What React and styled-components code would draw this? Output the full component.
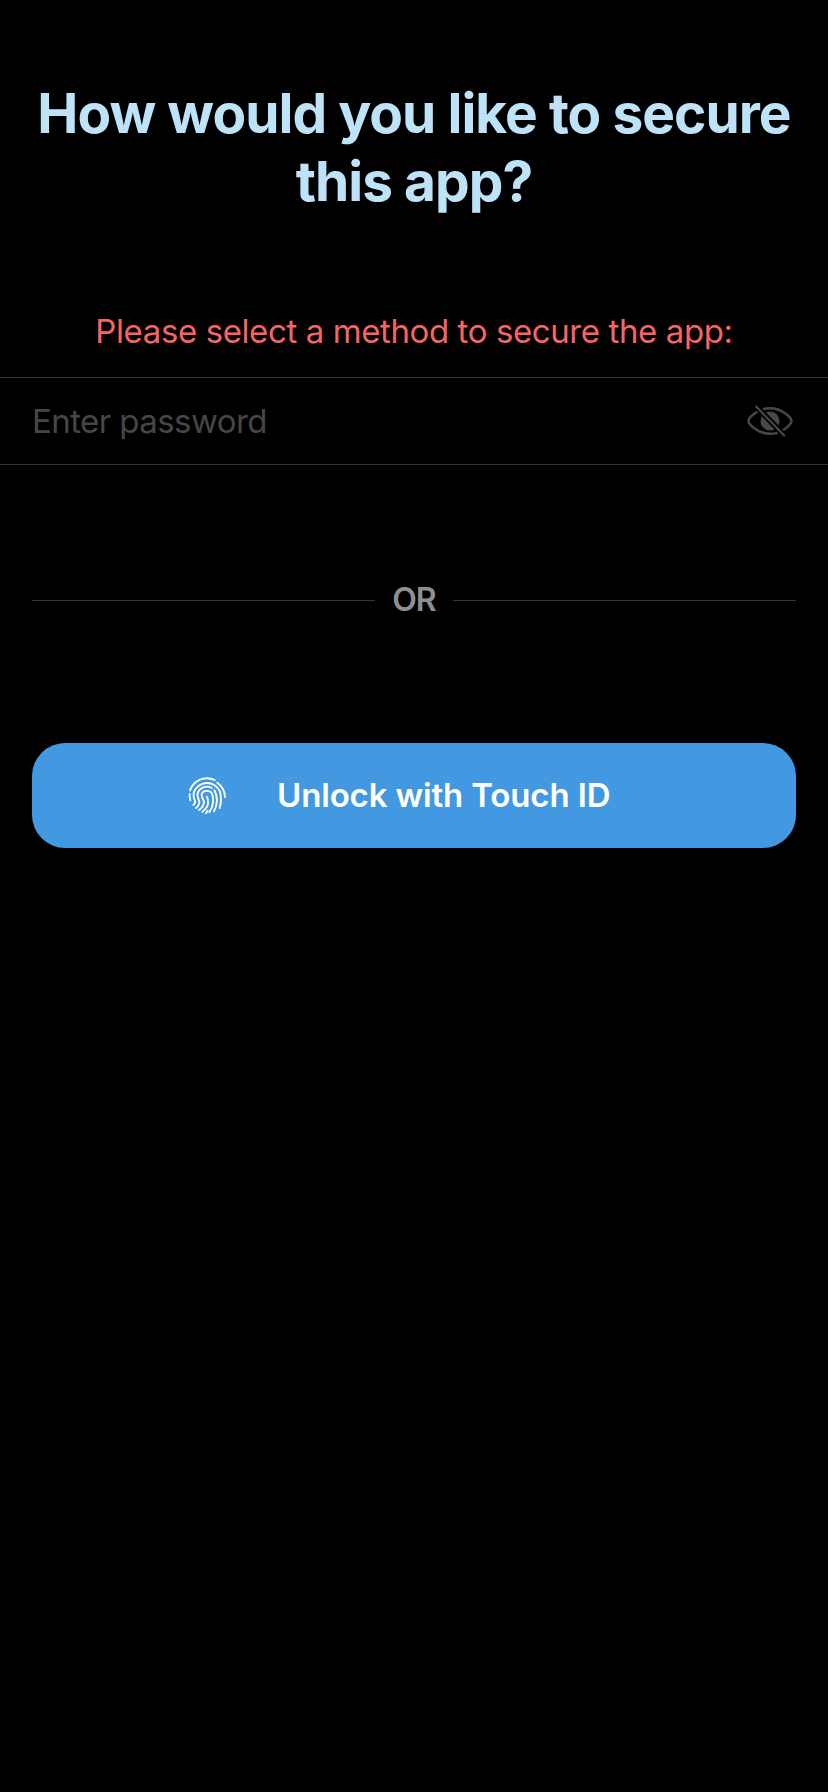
import React from "react";
import styled, { createGlobalStyle } from "styled-components";

const GlobalStyle = createGlobalStyle`
  *, *::before, *::after { box-sizing: border-box; }
  body {
    margin: 0;
    background: #000;
    font-family: Inter, "Liberation Sans", sans-serif;
  }
`;

const Screen = styled.main`
  display: flex;
  flex-direction: column;
  min-height: 1792px;
  padding-top: 79px;
  background: #000;
`;

const Title = styled.h1`
  margin: 0;
  color: #bee3f8;
  font-size: 55px;
  font-weight: 700;
  line-height: 68px;
  letter-spacing: -0.96px;
  text-align: center;
`;

const Hint = styled.p`
  margin: 96px 0 26px;
  color: #f56565;
  font-size: 33px;
  line-height: 40px;
  letter-spacing: -0.4px;
  text-align: center;
`;

const Field = styled.label`
  display: flex;
  align-items: center;
  height: 88px;
  padding: 0 35px 0 32px;
  border: solid #333336;
  border-width: 1px 0;
`;

const PasswordInput = styled.input`
  flex: 1;
  min-width: 0;
  height: 44px;
  padding: 0;
  border: 0;
  outline: 0;
  background: transparent;
  color: #fff;
  font: 400 33px/44px Inter, "Liberation Sans", sans-serif;
  letter-spacing: -0.57px;

  &::placeholder {
    color: #464648;
    opacity: 1;
  }
`;

const IconButton = styled.button`
  display: flex;
  padding: 0;
  border: 0;
  background: none;
  color: #48484a;
`;

const Divider = styled.div`
  display: flex;
  align-items: center;
  height: 40px;
  margin: 115px 32px 0;
  color: #8e8e93;
  font-size: 32px;
  font-weight: 600;
  letter-spacing: -1px;

  &::before,
  &::after {
    content: "";
    flex: 1;
    height: 1px;
    background: #363638;
  }
`;

const DividerLabel = styled.span`
  width: 78px;
  line-height: 40px;
  text-align: center;
`;

const UnlockButton = styled.button`
  display: flex;
  align-items: center;
  height: 105px;
  margin: 123px 32px 0;
  padding: 0 0 0 156px;
  border: 0;
  border-radius: 33px;
  background: #4299e1;
  color: #fff;
  font: 600 33px/40px Inter, "Liberation Sans", sans-serif;
  letter-spacing: -0.15px;
`;

const ButtonLabel = styled.span`
  margin-left: 51px;
  padding-bottom: 1px;
  white-space: nowrap;
`;

function EyeOffIcon() {
  return (
    <svg width="46" height="32" viewBox="0 0 138 96" fill="none" aria-hidden="true">
      <mask id="slashGap" maskUnits="userSpaceOnUse" x="0" y="0" width="138" height="96">
        <rect width="138" height="96" fill="#fff" />
        <path d="M20 -4L120 100" stroke="#000" strokeWidth="17" />
      </mask>
      <g mask="url(#slashGap)">
        <path
          d="M4.500 48C4.500 38 34 9.500 69 9.500S133.500 38 133.500 48S104 86.500 69 86.500S4.500 58 4.500 48Z"
          stroke="currentColor"
          strokeWidth="7.500"
        />
        <circle cx="69" cy="48" r="28.500" fill="currentColor" />
      </g>
      <path d="M27.500 4.500L111.500 91.500" stroke="currentColor" strokeWidth="6.500" strokeLinecap="round" />
    </svg>
  );
}

function FingerprintIcon() {
  return (
    <svg width="38" height="38" viewBox="25 37 114 114" fill="none" aria-hidden="true">
      <g stroke="currentColor" strokeWidth="5.600" strokeLinecap="round" strokeLinejoin="round">
        <path d="M31 77A54 54 0 0 1 105 46" />
        <path d="M30 88Q29 97 32 107" />
        <path d="M113 54A56 56 0 0 1 136 97" />
        <path d="M41 121Q48 116 46 109C43 102 40 95 42 85A42 42 0 0 1 121 81Q127 104 120 130" />
        <path d="M49 130Q60 121 59 110C55 101 52 94 54 86A29 29 0 0 1 96 70" />
        <path d="M104 77C115 95 114 120 103 140" />
        <path d="M58 136Q72 126 73 112C71 103 64 96 66 89C69 75 93 75 98 89C103 108 99 128 89 143" />
        <path d="M68 141C80 132 87 120 85 109Q84 102 82 96" />
        <path d="M79 146L84 138" />
      </g>
    </svg>
  );
}

export default function App() {
  return (
    <>
      <GlobalStyle />
      <Screen>
        <Title>How would you like to secure this app?</Title>
        <Hint>Please select a method to secure the app:</Hint>
        <Field>
          <PasswordInput type="password" placeholder="Enter password" />
          <IconButton type="button" aria-label="Show password">
            <EyeOffIcon />
          </IconButton>
        </Field>
        <Divider>
          <DividerLabel>OR</DividerLabel>
        </Divider>
        <UnlockButton type="button">
          <FingerprintIcon />
          <ButtonLabel>Unlock with Touch ID</ButtonLabel>
        </UnlockButton>
      </Screen>
    </>
  );
}
